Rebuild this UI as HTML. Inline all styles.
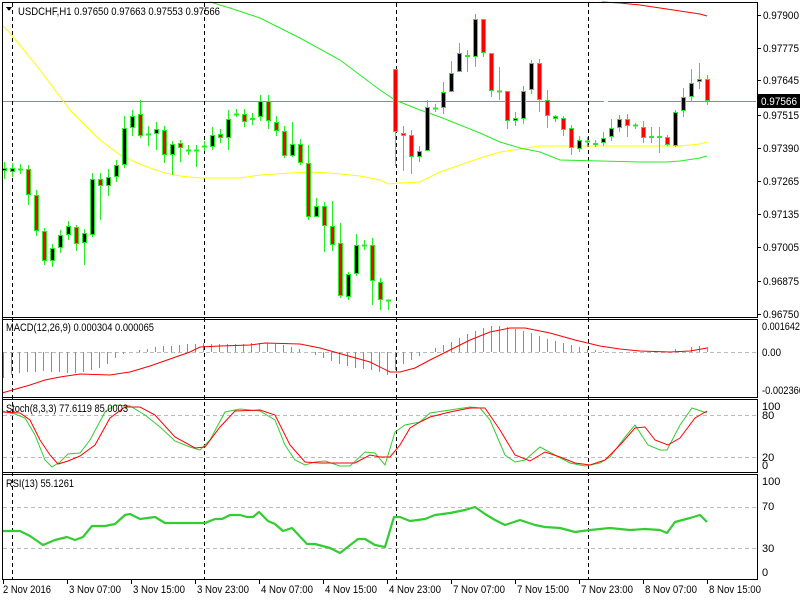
<!DOCTYPE html>
<html><head><meta charset="utf-8">
<style>
html,body{margin:0;padding:0;background:#fff;width:800px;height:600px;overflow:hidden}
svg{display:block;font-family:"Liberation Sans",Arial,sans-serif}
</style></head>
<body>
<svg id="s" width="800" height="600" viewBox="0 0 800 600" xmlns="http://www.w3.org/2000/svg" shape-rendering="crispEdges">
<rect width="800" height="600" fill="#fff"/>
<g id="g"></g>
</svg>
<script>
var NS="http://www.w3.org/2000/svg",g=document.getElementById('g');
function el(t,a,txt){var e=document.createElementNS(NS,t);for(var k in a)e.setAttribute(k,a[k]);if(txt!=null)e.textContent=txt;g.appendChild(e);return e;}
function pl(pts,col,w,extra){var a={points:pts.map(function(p){return p.join(',')}).join(' '),fill:'none',stroke:col,'stroke-width':w||1};if(extra)for(var k in extra)a[k]=extra[k];return el('polyline',a);}
function txt(x,y,s,size,col,tl){var a={x:x,y:y,'font-size':size||11,fill:col||'#000'};if(tl){a.textLength=tl;a.lengthAdjust='spacingAndGlyphs';}return el('text',a,s);}
[[415],[457]].forEach(function(v){el('line',{x1:3,x2:756,y1:v[0]+.5,y2:v[0]+.5,stroke:'#bbb','stroke-dasharray':'4,3'})});
[[507],[548]].forEach(function(v){el('line',{x1:3,x2:756,y1:v[0]+.5,y2:v[0]+.5,stroke:'#bbb','stroke-dasharray':'4,3'})});
el('line',{x1:3,x2:756,y1:352.5,y2:352.5,stroke:'#bbb','stroke-dasharray':'4,3'});
el('line',{x1:3,x2:604,y1:101.5,y2:101.5,stroke:'#8090a0'});
el('line',{x1:608,x2:756,y1:101.5,y2:101.5,stroke:'#8090a0'});
[12,204,396,588].forEach(function(x){el('line',{x1:x+.5,x2:x+.5,y1:3,y2:579,stroke:'#000','stroke-dasharray':'4,3'})});
pl([[2,25],[10,33],[40,70],[70,110],[100,140],[120,155],[135,162],[150,168],[165,173],[180,176],[200,178],[240,178],[260,175],[290,173],[310,172],[330,173],[360,176],[380,180],[388,184],[400,183],[420,182],[440,172],[460,165],[480,158],[500,152],[520,149],[540,146],[560,146],[600,146],[640,146],[680,146],[700,144],[707,142]],'#ffff00',1,{'shape-rendering':'auto'});
pl([[210,2],[230,8],[260,18],[300,38],[340,60],[360,75],[380,90],[395,100],[420,110],[440,117],[460,125],[480,133],[500,142],[520,148],[540,152],[560,160],[600,161],[640,162],[667,162],[680,161],[700,158],[707,156]],'#22ee22',1,{'shape-rendering':'auto'});
pl([[602,2],[620,3],[640,5],[660,8],[680,11],[700,14],[707,16]],'#ff0000',1,{'shape-rendering':'auto'});
var C=[[171,168],[172,168],[169,169],[169,195],[195,231],[231,261],[261,248],[248,235],[235,226],[227,244],[243,233],[235,179],[179,186],[186,177],[177,165],[165,128],[128,116],[114,136],[134,134],[134,129],[130,155],[155,144],[143,148],[150,150],[150,150],[146,146],[147,135],[134,138],[138,119],[115,114],[114,122],[120,118],[117,101],[101,121],[122,131],[131,156],[156,144],[144,163],[163,217],[217,206],[206,226],[226,245],[243,296],[297,274],[274,245],[245,245],[245,281],[282,300],[300,300],
[69,132],[133,136],[135,157],[157,151],[151,107],[108,108],[108,92],[92,73],[72,53],[55,57],[57,19],[19,53],[53,91],[91,91],[91,121],[121,118],[119,91],[90,63],[63,100],[100,116],[116,119],[118,130],[128,148],[149,140],[142,141],[143,145],[143,138],[137,128],[128,119],[119,126],[125,125],[127,138],[138,136],[136,138],[137,145],[146,112],[111,97],[97,83],[82,79],[79,101]];
var W={0:[6,8],3:[4,10],5:[3,4],6:[4,6],9:[2,7],10:[4,22],11:[6,2],12:[6,34],13:[8,10],15:[12,3],16:[6,8],17:[14,2],18:[8,12],19:[7,16],20:[4,8],21:[3,20],22:[3,14],24:[5,17],26:[8,3],28:[9,12],29:[5,2],32:[6,4],33:[6,8],34:[6,5],35:[5,2],36:[22,1],37:[5,2],38:[18,3],39:[8,0],40:[4,26],41:[25,6],42:[20,2],43:[2,3],44:[11,2],46:[7,24],47:[4,10],48:[0,10],49:[0,34],50:[7,35],51:[5,17],52:[5,5],53:[7,0],54:[4,4],55:[10,6],56:[12,0],57:[10,0],58:[5,15],59:[5,10],60:[0,4],61:[0,6],62:[24,9],63:[0,8],64:[6,5],65:[5,5],66:[3,4],67:[4,12],68:[10,12],69:[1,3],70:[2,6],71:[3,7],72:[4,3],73:[4,5],74:[3,2],75:[6,3],76:[9,4],77:[4,4],78:[5,11],79:[2,4],80:[6,5],81:[9,5],82:[9,15],83:[2,1],84:[2,1],85:[9,6],86:[14,5],87:[16,7],88:[4,4]};
C.forEach(function(c,i){var x=4+i*8;if(i>=49)x=395+(i-49)*8;var t=Math.min(c[0],c[1]),b=Math.max(c[0],c[1]);var w=W[i]||[5,5];
el('line',{x1:x+.5,x2:x+.5,y1:t-w[0],y2:b+w[1],stroke:'#22ee22'});
if(b-t<2){el('line',{x1:x-2,x2:x+3,y1:t+.5,y2:t+.5,stroke:'#22ee22','stroke-width':2});}
else el('rect',{x:x-1.5,y:t+.5,width:4,height:b-t-1,fill:c[1]<c[0]?'#000':'#ff0000',stroke:'#22ee22'});});
var H=[[3,378],[11,375],[19,373],[27,372],[35,372],[43,371],[51,372],[59,372],[67,373],[75,373],[83,372],[91,370],[99,368],[107,364],[115,358],[123,354],[139,350],[147,349],[155,347],[163,346],[171,346],[179,345],[187,344],[195,344],[203,343],[211,344],[219,344],[227,344],[235,344],[243,344],[251,343],[259,343],[267,343],[275,344],[283,345],[291,347],[299,349],[315,355],[323,358],[331,361],[339,364],[347,366],[355,368],[363,369],[371,370],[379,372],[387,375],[395,370],[403,364],[411,360],[419,356],[435,348],[443,345],[451,342],[459,338],[467,334],[475,331],[483,328],[491,326],[499,326],[507,327],[515,329],[523,331],[531,333],[539,336],[547,339],[555,341],[563,343],[571,345],[579,347],[587,349],[595,350],[603,351],[675,349],[691,347],[699,346],[707,347]];
H.forEach(function(h){el('line',{x1:h[0]+.5,x2:h[0]+.5,y1:352,y2:h[1],stroke:'#33cc33'})});
pl([[2,393],[30,385],[45,380],[60,377],[80,374],[110,375],[130,372],[150,366],[170,359],[190,352],[200,347],[220,346],[250,345],[265,343],[300,344],[320,348],[345,355],[370,362],[390,372],[400,372],[415,368],[430,360],[450,350],[470,340],[490,332],[510,328],[525,328],[550,333],[575,340],[600,346],[620,349],[640,351],[670,352],[690,351],[707,348]],'#ff0000',1,{'shape-rendering':'auto'});
pl([[2,411],[15,414],[25,418],[35,435],[45,460],[52,467],[60,462],[68,454],[80,453],[90,440],[105,412],[115,405],[130,406],[145,415],[160,427],[175,441],[190,447],[200,450],[210,440],[225,412],[240,409],[260,411],[275,420],[285,445],[295,460],[305,465],[315,462],[325,461],[340,466],[350,466],[365,452],[375,453],[385,465],[395,432],[405,425],[420,422],[430,413],[450,410],[470,407],[480,408],[490,420],[505,455],[515,462],[525,460],[540,447],[555,455],[570,463],[585,466],[600,463],[610,457],[625,437],[635,425],[648,445],[660,450],[667,450],[680,425],[692,408],[707,413]],'#33cc33',1,{'shape-rendering':'auto'});
pl([[2,412],[20,413],[30,420],[40,440],[50,455],[58,464],[68,461],[80,456],[95,445],[110,418],[125,407],[140,407],[155,415],[175,437],[195,448],[205,447],[220,427],[235,411],[260,410],[275,415],[290,445],[305,462],[320,463],[345,463],[355,463],[370,455],[380,457],[390,457],[400,445],[410,428],[420,422],[430,417],[450,412],[470,408],[485,408],[500,430],[515,455],[530,461],[545,452],[560,457],[575,463],[590,465],[605,460],[620,445],[635,428],[645,427],[655,440],[668,445],[680,438],[695,418],[707,411]],'#ff0000',1,{'shape-rendering':'auto'});
pl([[2,531],[20,531],[30,536],[43,545],[55,540],[67,537],[75,540],[83,537],[92,526],[105,526],[115,524],[125,515],[130,514],[140,519],[155,517],[165,523],[205,523],[215,519],[222,519],[230,515],[240,515],[247,517],[253,517],[259,512],[268,521],[275,524],[283,531],[292,528],[307,544],[315,544],[330,548],[340,553],[358,539],[365,539],[375,545],[385,547],[394,517],[400,517],[410,521],[425,519],[435,515],[450,513],[465,510],[475,507],[485,514],[495,520],[505,525],[520,520],[535,525],[545,527],[560,528],[575,532],[590,530],[610,528],[630,530],[645,529],[660,530],[667,533],[675,522],[690,518],[700,515],[707,522]],'#33cc33',2.2,{'shape-rendering':'auto','stroke-linejoin':'round'});
[[2,2,755,315],[2,319,755,78],[2,399,755,73],[2,474,755,105]].forEach(function(r){el('rect',{x:r[0]+.5,y:r[1]+.5,width:r[2],height:r[3],fill:'none',stroke:'#000'})});
el('rect',{x:0,y:0,width:2,height:600,fill:'#fff'});
el('line',{x1:2.5,x2:2.5,y1:2,y2:580,stroke:'#000'});
[['0.97900',15],['0.97775',48],['0.97645',80],['0.97515',115],['0.97390',148],['0.97265',181],['0.97135',214],['0.97005',247],['0.96875',281],['0.96750',314]].forEach(function(p){el('line',{x1:757,x2:761,y1:p[1]+.5,y2:p[1]+.5,stroke:'#000'});txt(763,p[1]+4,p[0],11,'#000',36)});
el('rect',{x:758,y:94,width:42,height:14,fill:'#000'});
txt(761,105,'0.97566',11,'#fff',36);
txt(762,330,'0.001642',11,'#000',38);txt(762,356,'0.00',11,'#000',19);txt(762,394,'-0.002366',11,'#000',42);
[['100',410],['80',419],['20',461],['0',469]].forEach(function(p){txt(762,p[1],p[0],11)});
[['100',485],['70',510],['30',552],['0',576]].forEach(function(p){txt(762,p[1],p[0],11)});
var T=['2 Nov 2016','3 Nov 07:00','3 Nov 15:00','3 Nov 23:00','4 Nov 07:00','4 Nov 15:00','4 Nov 23:00','7 Nov 07:00','7 Nov 15:00','7 Nov 23:00','8 Nov 07:00','8 Nov 15:00'];
T.forEach(function(s,i){var x=3+i*64;el('line',{x1:x+.5,x2:x+.5,y1:580,y2:584,stroke:'#000'});txt(i==0?3:x+2,593,s,11,'#000',i==0?48:52)});
el('polygon',{points:'6,7 12,7 9,11',fill:'#000'});
txt(18,15,'USDCHF,H1  0.97650 0.97663 0.97553 0.97566',11,'#000',202);
txt(6,331,'MACD(12,26,9) 0.000304 0.000065',11,'#000',148);
txt(6,412,'Stoch(8,3,3) 77.6119 85.0003',11,'#000',122);
txt(6,487,'RSI(13) 55.1261',11,'#000',68);
</script>
</body></html>
